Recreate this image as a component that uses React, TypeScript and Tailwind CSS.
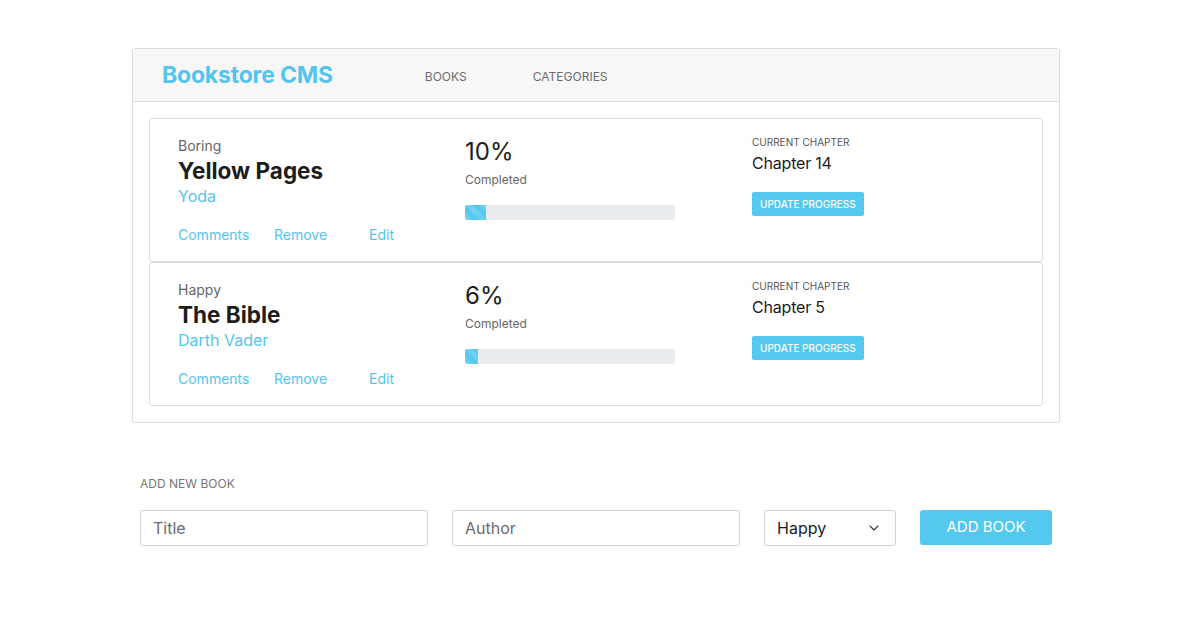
import { ChevronDown } from 'lucide-react';

const BOOKS = [
  { id: 1, category: 'Boring', title: 'Yellow Pages', author: 'Yoda', progress: 10, chapter: 'Chapter 14' },
  { id: 2, category: 'Happy', title: 'The Bible', author: 'Darth Vader', progress: 6, chapter: 'Chapter 5' },
];

function BookCard({ book }: { book: (typeof BOOKS)[number] }) {
  return (
    <div className="grid grid-cols-[287px_287px_1fr] h-[144px] pl-[28px] pt-[17px] border border-[#dedede] rounded-[3px] bg-white">
      <div>
        <p className="text-[14px] leading-[20px] text-[#666]">{book.category}</p>
        <h2 className="mt-px text-[22.5px] leading-[28px] font-bold text-[#1d1d1d]">{book.title}</h2>
        <p className="text-[16px] leading-[22px] text-[#55c5ee]">{book.author}</p>
        <div className="flex mt-[18px] text-[14px] leading-[20px] text-[#55c5ee]">
          <button className="w-[96px] text-left">Comments</button>
          <button className="w-[95px] text-left">Remove</button>
          <button className="text-left">Edit</button>
        </div>
      </div>
      <div className="pt-px">
        <p className="text-[24px] leading-[30px] text-[#1d1d1d]">{book.progress}%</p>
        <p className="mt-[5px] text-[12px] leading-[16px] text-[#666]">Completed</p>
        <div className="mt-[17px] w-[210px] h-[15px] rounded-[3px] bg-[#e9ecef] overflow-hidden">
          <div
            className="h-full bg-[#55c8ef] bg-[linear-gradient(45deg,rgba(255,255,255,.15)_25%,transparent_25%,transparent_50%,rgba(255,255,255,.15)_50%,rgba(255,255,255,.15)_75%,transparent_75%,transparent)] bg-[length:15px_15px]"
            style={{ width: `${book.progress}%` }}
          />
        </div>
      </div>
      <div className="-mt-px">
        <p className="text-[10px] leading-[14px] text-[#555]">CURRENT CHAPTER</p>
        <p className="mt-[3px] text-[16px] leading-[22px] tracking-[-0.2px] text-[#1d1d1d]">{book.chapter}</p>
        <button className="mt-[18px] h-[24px] px-[8px] rounded-[2px] bg-[#55c8ef] text-white text-[10px] font-medium">
          UPDATE PROGRESS
        </button>
      </div>
    </div>
  );
}

export default function App() {
  return (
    <div className="min-h-screen bg-white pt-12 font-['Inter','Helvetica_Neue',Arial,sans-serif]">
      <div className="w-[928px] ml-[132px]">
        <div className="border border-[#dcdcdc] rounded-[3px]">
          <header className="flex items-center h-[53px] bg-[#f7f7f7] border-b border-[#dcdcdc] pl-[29px] pt-px">
            <h1 className="text-[23px] font-bold text-[#55c5ee] tracking-[-0.2px]">Bookstore CMS</h1>
            <nav className="flex ml-[92px] pt-[2px] text-[12px] text-[#6b6b6b]">
              <a className="w-[108px]">BOOKS</a>
              <a>CATEGORIES</a>
            </nav>
          </header>
          <div className="p-[16px]">
            {BOOKS.map((book) => (
              <BookCard key={book.id} book={book} />
            ))}
          </div>
        </div>

        <section className="px-2 mt-[53px]">
          <h3 className="text-[12px] leading-[16px] text-[#777]">ADD NEW BOOK</h3>
          <form className="flex gap-6 mt-[18px]">
            <input
              placeholder="Title"
              className="w-[288px] h-[36px] px-3 border border-[#cfd3d8] rounded-[3px] text-[16px] placeholder:text-[#6c6c6c] outline-none"
            />
            <input
              placeholder="Author"
              className="w-[288px] h-[36px] px-3 border border-[#cfd3d8] rounded-[3px] text-[16px] placeholder:text-[#6c6c6c] outline-none"
            />
            <div className="w-[132px] h-[36px] flex items-center justify-between pl-3 pr-[13px] border border-[#cfd3d8] rounded-[3px] text-[16px] text-[#1d1d1d]">
              <span>Happy</span>
              <ChevronDown size={16} strokeWidth={1.6} className="text-[#333]" />
            </div>
            <button
              type="button"
              className="w-[132px] h-[35px] rounded-[3px] bg-[#55c8ef] text-white text-[15px]"
            >
              ADD BOOK
            </button>
          </form>
        </section>
      </div>
    </div>
  );
}
